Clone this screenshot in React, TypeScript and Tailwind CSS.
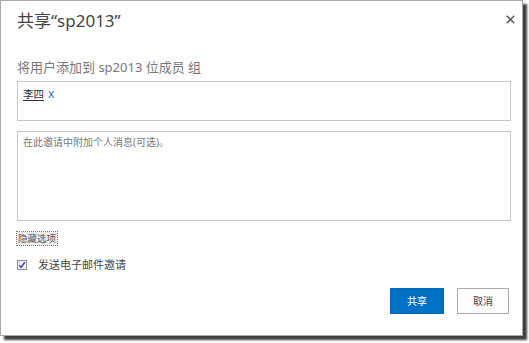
import React from "react";

export default function App() {
  const font = { fontFamily: '"Noto Sans","Noto Sans CJK SC",sans-serif' };
  return (
    <div className="w-[529px] h-[343px] bg-white relative" style={font}>
      <div className="w-[523px] h-[336px] bg-white border border-[#a8a8a8] shadow-[4px_4px_2px_rgba(0,0,0,0.75)] flex flex-col pl-[16px] pt-[8px]">
        <div className="flex items-start justify-between pr-[7px]">
          <div className="text-[17px] leading-[24px] text-[#444]">共享“sp2013”</div>
          <svg width="9" height="9" viewBox="0 0 9 9" className="mt-[6px]">
            <path d="M0.7 0.7 L8.3 8.3 M8.3 0.7 L0.7 8.3" stroke="#666" strokeWidth="1.6" />
          </svg>
        </div>
        <div className="mt-[25px] text-[13px] leading-[18px] text-[#777]">将用户添加到 sp2013 位成员 组</div>
        <div className="mt-[5px] w-[494px] h-[40px] border border-[#c6c6c6] pl-[5px] pt-[5px]">
          <div className="flex items-center text-[10.5px] leading-[14px]">
            <span className="text-[#333] underline underline-offset-2">李四</span>
            <span className="ml-[4px] text-[#2a6fc4] text-[12px]">x</span>
          </div>
        </div>
        <div className="mt-[10px] w-[494px] h-[90px] border border-[#c6c6c6] pl-[5px] pt-[3px]">
          <div className="text-[10px] leading-[14px] text-[#777]">在此邀请中附加个人消息(可选)。</div>
        </div>
        <div className="mt-[11px] flex">
          <span className="text-[9.5px] leading-[11px] text-[#555] bg-[#ececec] outline outline-1 outline-dotted outline-[#777] px-[1px] py-[1px]">隐藏选项</span>
        </div>
        <div className="mt-[13px] flex items-center">
          <div className="w-[10px] h-[10px] border border-[#8f8f8f] bg-gradient-to-br from-[#e6e6e6] to-[#fafafa] flex items-center justify-center">
            <svg width="8" height="8" viewBox="0 0 8 8">
              <path d="M1.2 4.2 L3.2 6.4 L6.8 1.2" stroke="#2b4aa8" strokeWidth="1.5" fill="none" />
            </svg>
          </div>
          <span className="ml-[11px] text-[11px] leading-[14px] text-[#444]">发送电子邮件邀请</span>
        </div>
        <div className="mt-[16px] flex justify-end pr-[13px] gap-[13px]">
          <button className="w-[54px] h-[26px] bg-[#0072c6] border border-[#0067b3] text-white text-[10px]">共享</button>
          <button className="w-[52px] h-[26px] bg-[#fdfdfd] border border-[#ababab] text-[#444] text-[10px]">取消</button>
        </div>
      </div>
    </div>
  );
}
